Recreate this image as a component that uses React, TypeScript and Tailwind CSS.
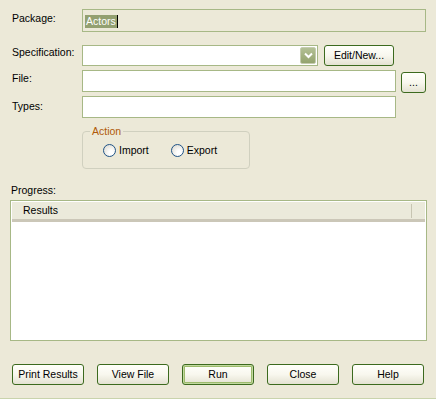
import React from 'react';

const font = { fontFamily: '"Liberation Sans", Arial, sans-serif' };

function XpButton({ label, width = 'w-[72px]', isDefault = false }: { label: string; width?: string; isDefault?: boolean }) {
    return (
        <button
            className={`${width} h-[21px] rounded-[3px] border border-[#3C6A1E] bg-gradient-to-b from-[#FFFFFB] via-[#F8F7EE] to-[#E4E2D2] text-[10.5px] text-black leading-none flex items-center justify-center p-0 ${isDefault ? 'shadow-[inset_0_0_0_1px_#C2D8A0,inset_0_0_0_2px_#9DBB6C]' : ''}`}
        >
            {label}
        </button>
    );
}

function Radio({ label }: { label: string }) {
    return (
        <label className="flex items-center gap-[3px]">
            <span className="w-[13px] h-[13px] rounded-full border border-[#1F5387] bg-[radial-gradient(circle_at_65%_70%,#FFFFFF_20%,#DCDAD0_90%)]" />
            <span>{label}</span>
        </label>
    );
}

function ChevronDown() {
    return (
        <svg width="9" height="7" viewBox="0 0 9 7">
            <path d="M1 1.5 L4.5 5 L8 1.5" fill="none" stroke="#FFFFFF" strokeWidth="2" />
        </svg>
    );
}

export default function App() {
    return (
        <div className="w-[436px] h-[399px] bg-[#ECE9D8] text-black text-[10.5px] flex flex-col border-b border-[#C9D3AC]" style={font}>
            {/* Package */}
            <div className="flex mt-[9px] h-[23px]">
                <div className="w-[70px] ml-[12px] pt-[3px] leading-[13px]">Package:</div>
                <div className="w-[344px] h-[23px] border border-[#A7B886] bg-[#ECE9D8] flex items-center pl-[2px]">
                    <span className="bg-[#93A070] text-white leading-[13px] px-[1px] mt-[1px]">Actors</span>
                    <span className="w-[1px] h-[13px] bg-black mt-[1px]" />
                </div>
            </div>

            {/* Specification */}
            <div className="flex mt-[13px] h-[21px]">
                <div className="w-[70px] ml-[12px] pt-[1px] leading-[13px]">Specification:</div>
                <div className="w-[236px] h-[21px] border border-[#A7B886] bg-white p-[1px] flex justify-end">
                    <div className="w-[16px] h-[17px] rounded-[2px] border border-[#C5CCAF] bg-gradient-to-b from-[#B3C095] to-[#94A36E] flex items-center justify-center">
                        <ChevronDown />
                    </div>
                </div>
                <div className="ml-[6px]">
                    <XpButton label="Edit/New..." width="w-[70px]" />
                </div>
            </div>

            {/* File */}
            <div className="flex mt-[4px] h-[22px]">
                <div className="w-[70px] ml-[12px] pt-[2px] leading-[13px]">File:</div>
                <div className="w-[314px] h-[22px] border border-[#A7B886] bg-white" />
                <div className="ml-[5px] mt-[2px]">
                    <XpButton label="..." width="w-[25px]" />
                </div>
            </div>

            {/* Types */}
            <div className="flex mt-[4px] h-[22px]">
                <div className="w-[70px] ml-[12px] pt-[4px] leading-[13px]">Types:</div>
                <div className="w-[314px] h-[22px] border border-[#A7B886] bg-white" />
            </div>

            {/* Action group */}
            <fieldset className="ml-[82px] mt-[7px] w-[168px] h-[44px] border border-[#D0D0BF] rounded-[4px] px-0">
                <legend className="ml-[7px] px-[2px] text-[#B05A08] leading-[13px]">Action</legend>
                <div className="flex items-center gap-[22px] ml-[20px] mt-[5px]">
                    <Radio label="Import" />
                    <Radio label="Export" />
                </div>
            </fieldset>

            {/* Progress */}
            <div className="ml-[11px] mt-[15px] leading-[13px]">Progress:</div>
            <div className="ml-[10px] mt-[3px] w-[417px] h-[141px] border border-[#A7B886] bg-white p-[1px]">
                <div className="h-[20px] bg-[#EBEADB] border-b-[3px] border-[#CBC7B8] flex items-center">
                    <div className="w-[399px] pl-[11px] leading-[13px]">Results</div>
                    <div className="w-[1px] h-[14px] bg-[#C7C5B2]" />
                </div>
            </div>

            {/* Buttons */}
            <div className="mx-[12px] mt-[23px] flex justify-between">
                <XpButton label="Print Results" />
                <XpButton label="View File" />
                <XpButton label="Run" isDefault />
                <XpButton label="Close" />
                <XpButton label="Help" />
            </div>
        </div>
    );
}
